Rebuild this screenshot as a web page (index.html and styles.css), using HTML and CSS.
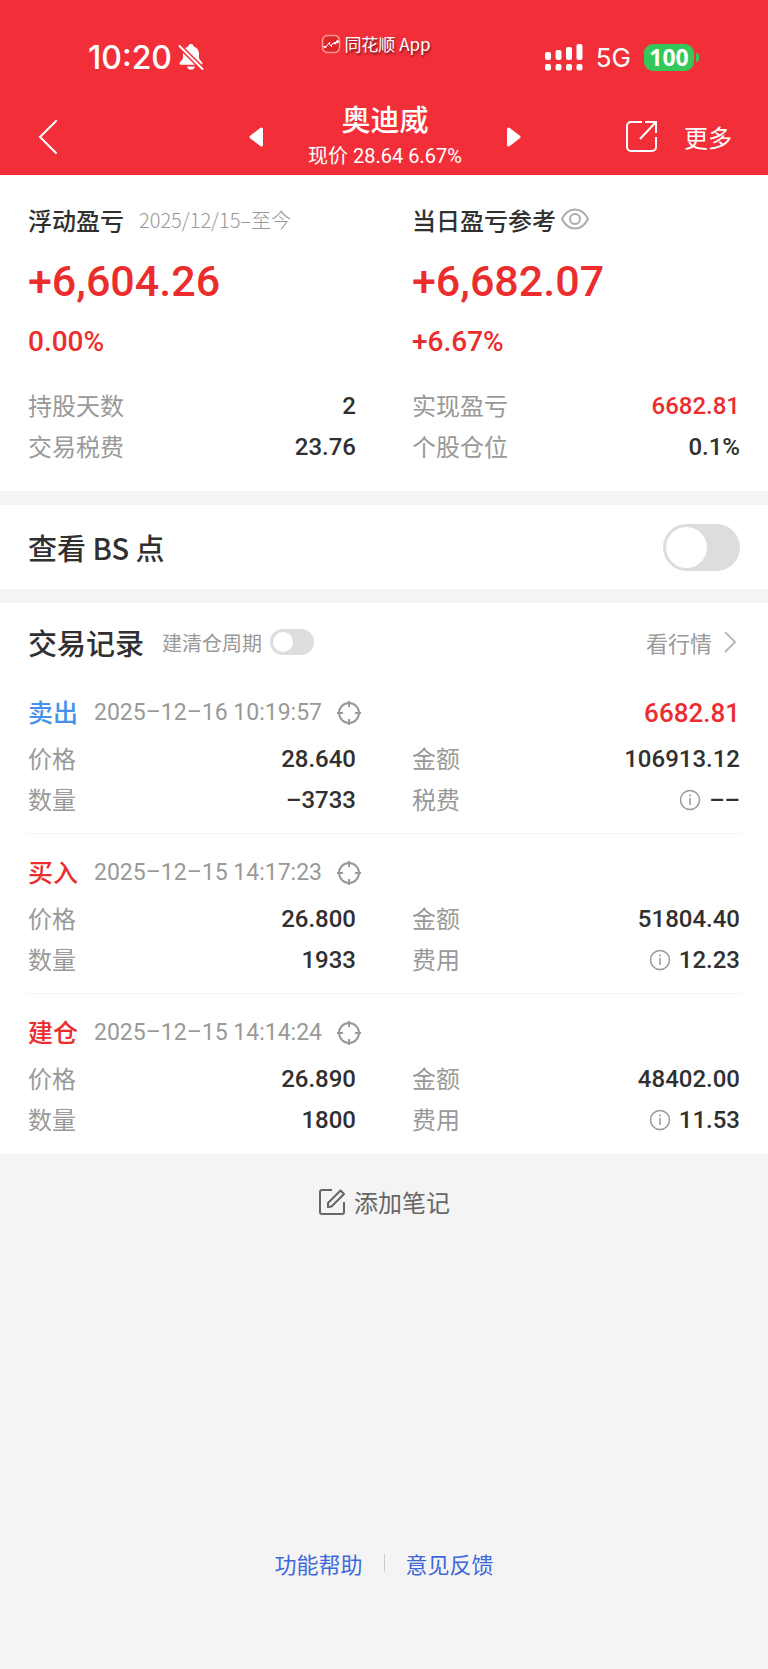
FILE: index.html
```html
<!DOCTYPE html>
<html lang="zh-CN">
  <head>
    <meta charset="UTF-8">
    <meta name="viewport" content="width=device-width, initial-scale=1">
    <title>奥迪威</title>
    <link rel="stylesheet" href="styles.css">
  </head>
  <body>
    <header class="header">
      <div class="status">
        <div class="status-left">
          <span class="clock">10:20</span>
          <svg width="26" height="28" viewBox="0 0 26 28" fill="none">
            <path d="M13 1c-1.600 0-2.600 1-2.800 2.400C6.500 4.800 5 7.600 5 11v3.500c0 2.500-3.500 4.200-3.500 6 0 .8.600 1.200 1.500 1.200h20c.9 0 1.500-.4 1.500-1.200 0-1.800-3.500-3.500-3.500-6V11c0-3.400-1.500-6.200-5.200-7.600C15.600 2 14.600 1 13 1z" fill="#fff"/>
            <path d="M9 23.500h8c-.4 2-2 3.300-4 3.300s-3.600-1.300-4-3.300z" fill="#fff"/>
            <path d="M0 1.500l25 25" stroke="#f22f38" stroke-width="5"/>
            <path d="M1.500 3L24.500 26" stroke="#fff" stroke-width="2" stroke-linecap="round"/>
          </svg>
        </div>
        <div class="brand">
          <svg width="20" height="20" viewBox="0 0 20 20" fill="none">
            <rect x="1.500" y="1.500" width="17" height="17" rx="5" fill="#dd252c" stroke="#f99" stroke-width="1.500"/>
            <path d="M2 12l3 1 3-4 2 3 2-3 2 1 3-2" stroke="#fff" stroke-width="1"/>
            <path d="M3 13h2M8 9h1M10 12h1M13 9h2" stroke="#fff" stroke-width="2"/>
            <circle cx="16.500" cy="7.500" r="1.500" fill="#fff"/>
          </svg>
          <span>同花顺 App</span>
        </div>
        <div class="status-right">
          <svg width="38" height="27" viewBox="0 0 38 27" fill="#fff">
            <rect x="0" y="8" width="6" height="8" rx="2"/>
            <rect x="10.500" y="6" width="6" height="10" rx="2"/>
            <rect x="21" y="3" width="6" height="13" rx="2"/>
            <rect x="31.500" y="0" width="6" height="16" rx="2"/>
            <rect x="0" y="20" width="6" height="6.500" rx="2"/>
            <rect x="10.500" y="20" width="6" height="6.500" rx="2"/>
            <rect x="21" y="20" width="6" height="6.500" rx="2"/>
            <rect x="31.500" y="20" width="6" height="6.500" rx="2"/>
          </svg>
          <span class="network">5G</span>
          <span class="battery">100</span>
        </div>
      </div>
      <nav class="nav">
        <button type="button" class="icon-btn" aria-label="返回">
          <svg width="20" height="36" viewBox="0 0 20 36" fill="none" stroke="#fff" stroke-width="2" stroke-linecap="round">
            <path d="M18 2L2 18l16 16"/>
          </svg>
        </button>
        <div class="stock">
          <button type="button" class="icon-btn" aria-label="上一只">
            <svg width="14" height="20" viewBox="0 0 14 20" fill="#fff" stroke="#fff" stroke-width="3" stroke-linejoin="round">
              <path d="M12.500 2v16L2 10z"/>
            </svg>
          </button>
          <div class="stock-info">
            <h1 class="stock-name">奥迪威</h1>
            <div class="stock-price">现价 28.64 6.67%</div>
          </div>
          <button type="button" class="icon-btn" aria-label="下一只">
            <svg width="14" height="20" viewBox="0 0 14 20" fill="#fff" stroke="#fff" stroke-width="3" stroke-linejoin="round">
              <path d="M1.500 2v16L12 10z"/>
            </svg>
          </button>
        </div>
        <div class="nav-right">
          <button type="button" class="icon-btn" aria-label="分享">
            <svg width="33" height="33" viewBox="0 0 33 33" fill="none" stroke="#fff" stroke-width="2">
              <path d="M17 2H6a4 4 0 0 0-4 4v21a4 4 0 0 0 4 4h21a4 4 0 0 0 4-4V17M20 2h11v11M31 2L15 19"/>
            </svg>
          </button>
          <button type="button" class="more">更多</button>
        </div>
      </nav>
    </header>

    <main>
      <section class="card summary">
        <div>
          <div class="summary-title">
            <h2>浮动盈亏</h2>
            <span class="period">2025/12/15–至今</span>
          </div>
          <div class="amount">+6,604.26</div>
          <div class="percent">0.00%</div>
          <div class="row"><span class="name">持股天数</span><span class="num">2</span></div>
          <div class="row"><span class="name">交易税费</span><span class="num">23.76</span></div>
        </div>
        <div>
          <div class="summary-title">
            <h2>当日盈亏参考</h2>
            <button type="button" class="icon-btn eye" aria-label="隐藏金额">
              <svg width="28" height="22" viewBox="0 0 28 22" fill="none" stroke="#aaa" stroke-width="2">
                <path d="M1 11C4 5 8.500 1.500 14 1.500S24 5 27 11c-3 6-7.500 9.500-13 9.500S4 17 1 11z"/>
                <circle cx="14" cy="11" r="5"/>
              </svg>
            </button>
          </div>
          <div class="amount">+6,682.07</div>
          <div class="percent">+6.67%</div>
          <div class="row"><span class="name">实现盈亏</span><span class="num red">6682.81</span></div>
          <div class="row"><span class="name">个股仓位</span><span class="num">0.1%</span></div>
        </div>
      </section>

      <section class="card bs">
        <label for="bs" class="title">查看 BS 点</label>
        <input type="checkbox" id="bs" class="switch">
      </section>

      <section class="card records">
        <div class="records-head">
          <h2 class="title">交易记录</h2>
          <label for="cycle" class="cycle">建清仓周期</label>
          <input type="checkbox" id="cycle" class="switch small">
          <a href="#" class="quote">看行情
            <svg width="12" height="22" viewBox="0 0 12 22" fill="none" stroke="#bbb" stroke-width="2">
              <path d="M1 1l10 10L1 21"/>
            </svg>
          </a>
        </div>

        <article class="record">
          <div class="record-head">
            <span class="action blue">卖出</span>
            <time>2025–12–16 10:19:57</time>
            <svg class="target" width="26" height="26" viewBox="0 0 26 26" fill="none" stroke="#999" stroke-width="2">
              <circle cx="13" cy="13" r="10"/>
              <path d="M13 1v6M13 19v6M1 13h6M19 13h6"/>
            </svg>
            <span class="profit">6682.81</span>
          </div>
          <div class="grid">
            <div class="row"><span class="name">价格</span><span class="num">28.640</span></div>
            <div class="row"><span class="name">金额</span><span class="num">106913.12</span></div>
            <div class="row"><span class="name">数量</span><span class="num">–3733</span></div>
            <div class="row">
              <span class="name">税费</span>
              <span class="num">
                <svg width="22" height="22" viewBox="0 0 22 22" fill="none" stroke="#999">
                  <circle cx="11" cy="11" r="9.500" stroke-width="1.500"/>
                  <path d="M11 9v7M11 5.500v2" stroke-width="1.500"/>
                </svg>
                ––
              </span>
            </div>
          </div>
        </article>

        <article class="record">
          <div class="record-head">
            <span class="action">买入</span>
            <time>2025–12–15 14:17:23</time>
            <svg class="target" width="26" height="26" viewBox="0 0 26 26" fill="none" stroke="#999" stroke-width="2">
              <circle cx="13" cy="13" r="10"/>
              <path d="M13 1v6M13 19v6M1 13h6M19 13h6"/>
            </svg>
          </div>
          <div class="grid">
            <div class="row"><span class="name">价格</span><span class="num">26.800</span></div>
            <div class="row"><span class="name">金额</span><span class="num">51804.40</span></div>
            <div class="row"><span class="name">数量</span><span class="num">1933</span></div>
            <div class="row">
              <span class="name">费用</span>
              <span class="num">
                <svg width="22" height="22" viewBox="0 0 22 22" fill="none" stroke="#999">
                  <circle cx="11" cy="11" r="9.500" stroke-width="1.500"/>
                  <path d="M11 9v7M11 5.500v2" stroke-width="1.500"/>
                </svg>
                12.23
              </span>
            </div>
          </div>
        </article>

        <article class="record">
          <div class="record-head">
            <span class="action">建仓</span>
            <time>2025–12–15 14:14:24</time>
            <svg class="target" width="26" height="26" viewBox="0 0 26 26" fill="none" stroke="#999" stroke-width="2">
              <circle cx="13" cy="13" r="10"/>
              <path d="M13 1v6M13 19v6M1 13h6M19 13h6"/>
            </svg>
          </div>
          <div class="grid">
            <div class="row"><span class="name">价格</span><span class="num">26.890</span></div>
            <div class="row"><span class="name">金额</span><span class="num">48402.00</span></div>
            <div class="row"><span class="name">数量</span><span class="num">1800</span></div>
            <div class="row">
              <span class="name">费用</span>
              <span class="num">
                <svg width="22" height="22" viewBox="0 0 22 22" fill="none" stroke="#999">
                  <circle cx="11" cy="11" r="9.500" stroke-width="1.500"/>
                  <path d="M11 9v7M11 5.500v2" stroke-width="1.500"/>
                </svg>
                11.53
              </span>
            </div>
          </div>
        </article>
      </section>

      <button type="button" class="add-note">
        <svg width="28" height="28" viewBox="0 0 28 28" fill="none" stroke="#666" stroke-width="2" stroke-linejoin="round">
          <path d="M14 2H4a2 2 0 0 0-2 2v20a2 2 0 0 0 2 2h20a2 2 0 0 0 2-2V14"/>
          <path d="M10 19v-4L22.500 2.500l3.500 3.500L13.500 18.500z"/>
        </svg>
        添加笔记
      </button>
    </main>

    <footer class="footer">
      <a href="#">功能帮助</a>
      <span class="line"></span>
      <a href="#">意见反馈</a>
    </footer>
  </body>
</html>
```

FILE: styles.css
```css
* {
  box-sizing: border-box;
}
body {
  margin: 0;
  min-height: 100vh;
  display: flex;
  flex-direction: column;
  background-color: #f4f4f4;
  color: #303030;
  font-family: "Noto Sans CJK SC", sans-serif;
  font-size: 24px;
}
h1,
h2 {
  margin: 0;
}
svg {
  display: block;
  flex: none;
}
a {
  text-decoration: none;
}
button {
  padding: 0;
  border: none;
  background: none;
  color: inherit;
  font: inherit;
  cursor: pointer;
}

/* header */
.header {
  background-color: #f22f38;
  color: #ffffff;
}
.status {
  display: grid;
  grid-template-columns: 1fr auto 1fr;
  align-items: center;
  height: 92px;
  padding: 22px 70px 0;
}
.status-left {
  display: flex;
  align-items: center;
  gap: 6px;
  padding-left: 18px;
}
.clock {
  font-family: Inter, sans-serif;
  font-size: 32px;
  font-weight: 500;
}
.brand {
  display: flex;
  align-items: center;
  align-self: start;
  gap: 3px;
  margin-right: 16px;
  padding-top: 8px;
  font-size: 17px;
  line-height: 28px;
  text-shadow: 1px 2px 2px rgba(0, 0, 0, 0.5);
}
.status-right {
  display: flex;
  align-items: center;
  justify-content: flex-end;
  gap: 13px;
}
.network {
  font-family: Inter, sans-serif;
  font-size: 26px;
}
.battery {
  position: relative;
  width: 50px;
  margin-right: 4px;
  border-radius: 9px;
  background-color: #34c759;
  font-family: "Noto Sans", sans-serif;
  font-size: 23px;
  font-weight: 700;
  line-height: 27px;
  text-align: center;
}
.battery::after {
  content: "";
  position: absolute;
  top: 9px;
  right: -5px;
  width: 3px;
  height: 9px;
  border-radius: 0 4px 4px 0;
  background-color: #34c759;
}
.nav {
  display: grid;
  grid-template-columns: 1fr auto 1fr;
  align-items: center;
  height: 83px;
  padding: 6px 36px 0 38px;
}
.stock {
  display: flex;
  align-items: center;
  gap: 45px;
}
.stock-info {
  text-align: center;
}
.stock-name {
  font-size: 29px;
  font-weight: 500;
  line-height: 38px;
}
.stock-price {
  font-family: Roboto, "Noto Sans CJK SC", sans-serif;
  font-size: 20px;
  line-height: 38px;
}
.nav-right {
  display: flex;
  align-items: center;
  justify-content: flex-end;
  gap: 26px;
}

/* profit summary */
.card {
  margin-bottom: 14px;
  padding: 0 28px;
  background-color: #ffffff;
}
.summary {
  display: grid;
  grid-template-columns: 1fr 1fr;
  column-gap: 56px;
  padding-top: 24px;
  padding-bottom: 24px;
}
.summary-title {
  display: flex;
  align-items: center;
  height: 40px;
}
.summary-title h2 {
  font-size: 24px;
  font-weight: 500;
}
.period {
  margin-left: 15px;
  color: #999999;
  font-size: 20px;
  font-weight: 300;
}
.eye {
  margin-left: 5px;
}
.amount,
.percent,
.num,
.profit,
time {
  font-family: Roboto, "Noto Sans CJK SC", sans-serif;
  font-weight: 500;
}
.amount {
  color: #eb2d2e;
  font-size: 43px;
  line-height: 84px;
}
.percent {
  margin-bottom: 24px;
  color: #eb2d2e;
  font-size: 28px;
  line-height: 38px;
}
.row {
  display: flex;
  align-items: center;
  justify-content: space-between;
  height: 41px;
}
.name {
  padding-bottom: 3px;
  color: #999999;
}
.num {
  display: flex;
  align-items: center;
  gap: 8px;
}
.red {
  color: #eb2d2e;
}

/* switches */
.bs {
  display: flex;
  align-items: center;
  justify-content: space-between;
  height: 84px;
}
.title {
  font-size: 29px;
  font-weight: 500;
}
.switch {
  appearance: none;
  display: flex;
  align-items: center;
  width: 77px;
  height: 47px;
  margin: 0;
  padding: 3px;
  border-radius: 24px;
  background-color: #dddddd;
}
.switch::before {
  content: "";
  width: 41px;
  height: 41px;
  border-radius: 50%;
  background-color: #ffffff;
}
.switch:checked {
  justify-content: flex-end;
  background-color: #eb2d2e;
}
.small {
  width: 44px;
  height: 26px;
}
.small::before {
  width: 20px;
  height: 20px;
}

/* trade records */
.records {
  margin-bottom: 0;
}
.records-head {
  display: flex;
  align-items: center;
  padding: 12px 0 5px;
  height: 71px;
}
.cycle {
  margin-left: 18px;
  margin-right: 8px;
  color: #999999;
  font-size: 20px;
}
.quote {
  display: flex;
  align-items: center;
  gap: 12px;
  margin-left: auto;
  padding-right: 4px;
  color: #999999;
  font-size: 22px;
}
.record {
  padding: 13px 0;
  border-bottom: 1px solid #f4f4f4;
}
.record:last-child {
  border-color: transparent;
}
.record-head {
  display: flex;
  align-items: center;
  height: 51px;
}
.action {
  padding-bottom: 3px;
  color: #eb2d2e;
  font-size: 25px;
  font-weight: 500;
}
.blue {
  color: #4691ee;
}
time {
  margin-left: 16px;
  color: #999999;
  font-size: 23px;
  font-weight: 400;
}
.target {
  margin-left: 14px;
}
.profit {
  margin-left: auto;
  color: #eb2d2e;
  font-size: 26px;
}
.grid {
  display: grid;
  grid-template-columns: 1fr 1fr;
  column-gap: 56px;
}

.add-note {
  display: flex;
  align-items: center;
  gap: 8px;
  margin: 27px auto 0;
  color: #666666;
  line-height: 42px;
}

.footer {
  display: flex;
  align-items: center;
  justify-content: center;
  gap: 21px;
  margin-top: auto;
  padding-bottom: 90px;
  font-size: 22px;
}
.footer a {
  color: #3d68dc;
}
.line {
  width: 1px;
  height: 18px;
  background-color: #cccccc;
}
```
